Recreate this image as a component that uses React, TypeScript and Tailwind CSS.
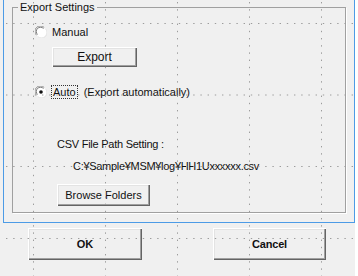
const FONT = { fontFamily: '"Liberation Sans", Arial, sans-serif' };

function Radio({ checked }: { checked?: boolean }) {
  return (
    <svg width="12" height="12" viewBox="0 0 12 12" className="shrink-0">
      <circle cx="6" cy="6" r="5.5" fill="#ffffff" />
      <path d="M1.5 9.2 A5 5 0 0 1 9.2 1.5" fill="none" stroke="#8c8c8c" strokeWidth="1" />
      <path d="M2.5 8.5 A4 4 0 0 1 8.5 2.5" fill="none" stroke="#5a5a5a" strokeWidth="0.8" />
      <path d="M10.5 2.8 A5 5 0 0 1 2.8 10.5" fill="none" stroke="#e4e4e4" strokeWidth="1" />
      {checked && <circle cx="6" cy="6" r="1.8" fill="#111111" />}
    </svg>
  );
}

function WinButton({ className, children }: { className: string; children: React.ReactNode }) {
  return (
    <div
      className={`flex items-center justify-center bg-[#f0f0f0] text-[#111] shadow-[inset_1px_1px_0_#ffffff,inset_-1px_-1px_0_#646464,inset_-2px_-2px_0_#a0a0a0,inset_2px_2px_0_#e3e3e3] ${className}`}
    >
      {children}
    </div>
  );
}

function GridOverlay() {
  const xs = [33.5, 105.5, 177.5, 249.5, 321.5];
  const ys = [23.5, 95, 166.5, 238.5];
  return (
    <svg width="358" height="276" className="absolute top-0 left-0 pointer-events-none">
      {xs.map(x => (
        <line key={`x${x}`} x1={x} y1="2" x2={x} y2="276" stroke="#9c9c9c" strokeWidth="1" strokeDasharray="1.4 5.8" />
      ))}
      {ys.map(y => (
        <line key={`y${y}`} x1="6" y1={y} x2="358" y2={y} stroke="#9c9c9c" strokeWidth="1" strokeDasharray="1.4 5.8" />
      ))}
    </svg>
  );
}

export default function App() {
  return (
    <div className="relative w-[358px] h-[276px] bg-white overflow-hidden" style={FONT}>
      <div className="w-[355px] h-[276px] bg-[#f0f0f0] flex flex-col">
        {/* selected dialog area */}
        <div className="ml-[3px] w-[352px] h-[223px] border-x border-b border-[#4c9be6] flex flex-col">
          <div className="relative ml-[8px] mt-[7px] w-[334px] h-[206px] border border-[#a0a0a0] shadow-[1px_1px_0_#ffffff] flex flex-col">
            <div className="absolute -top-[7px] left-[5px] px-[2px] bg-[#f0f0f0] text-[11px] leading-[13px] text-[#111]">
              Export Settings
            </div>

            <div className="mt-[18px] ml-[22px] flex items-center h-[12px]">
              <Radio />
              <span className="ml-[5px] text-[11px] leading-[13px] text-[#111]">Manual</span>
            </div>

            <WinButton className="mt-[9px] ml-[39px] w-[85px] h-[20px] text-[12px]">Export</WinButton>

            <div className="mt-[19px] ml-[22px] flex items-center h-[12px]">
              <Radio checked />
              <span className="ml-[4px] px-px border border-dotted border-[#333] text-[11px] leading-[12px] text-[#111]">Auto</span>
              <span className="ml-[6px] text-[11px] leading-[13px] text-[#111]">(Export automatically)</span>
            </div>

            <div className="mt-[39px] ml-[44px] h-[14px] text-[11px] leading-[14px] tracking-[-0.25px] text-[#111]">
              CSV File Path Setting :
            </div>
            <div className="mt-[8px] ml-[60px] h-[14px] text-[11px] leading-[14px] tracking-[-0.3px] text-[#111]">
              C:¥Sample¥MSM¥log¥HH1Uxxxxxx.csv
            </div>

            <WinButton className="mt-[11px] ml-[44px] w-[93px] h-[22px] text-[11px]">Browse Folders</WinButton>
          </div>
        </div>

        {/* dialog buttons */}
        <div className="mt-[5px] flex">
          <WinButton className="ml-[28px] w-[114px] h-[32px] text-[11px] font-bold">OK</WinButton>
          <WinButton className="ml-[71px] w-[113px] h-[32px] text-[11px] font-bold tracking-[-0.2px]">Cancel</WinButton>
        </div>
      </div>
      <GridOverlay />
    </div>
  );
}
